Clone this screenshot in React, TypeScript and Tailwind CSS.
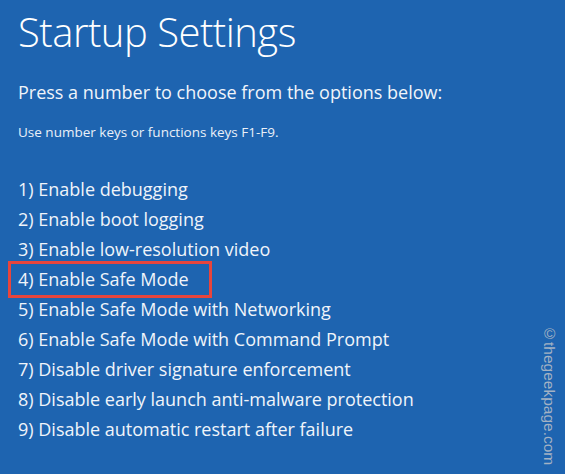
import React from "react";

const items = [
  "1) Enable debugging",
  "2) Enable boot logging",
  "3) Enable low-resolution video",
  "4) Enable Safe Mode",
  "5) Enable Safe Mode with Networking",
  "6) Enable Safe Mode with Command Prompt",
  "7) Disable driver signature enforcement",
  "8) Disable early launch anti-malware protection",
  "9) Disable automatic restart after failure",
];

export default function App() {
  return (
    <div
      className="relative w-[565px] h-[474px] overflow-hidden bg-[#1e64b0] text-white"
      style={{ fontFamily: '"Open Sans", "Noto Sans", sans-serif' }}
    >
      <div className="flex flex-col pl-[18px] pt-[7px]">
        <h1 className="text-[40px] font-light leading-[50px] tracking-[-0.5px]">Startup Settings</h1>
        <p className="mt-[22px] text-[18px] font-normal leading-[26px] text-[#f0f4fa]">
          Press a number to choose from the options below:
        </p>
        <p className="mt-[17px] text-[13.5px] leading-[20px] text-[#eaf0f8]">
          Use number keys or functions keys F1-F9.
        </p>
        <ul className="mt-[32px] flex flex-col">
          {items.map((t, i) => (
            <li key={i} className="relative h-[30px] text-[18px] leading-[30px] text-[#f0f4fa]">
              {t}
              {i === 3 && (
                <span className="absolute left-[-10px] top-[-3px] w-[204px] h-[37px] border-[3px] border-[#e8453c]" />
              )}
            </li>
          ))}
        </ul>
      </div>
      <div
        className="absolute left-[538px] top-[325px] text-[15.5px] text-[#a3b2c4] whitespace-nowrap [writing-mode:vertical-rl]"
        style={{ fontFamily: '"Liberation Sans", Arial, sans-serif' }}
      >
        ©thegeekpage.com
      </div>
    </div>
  );
}
